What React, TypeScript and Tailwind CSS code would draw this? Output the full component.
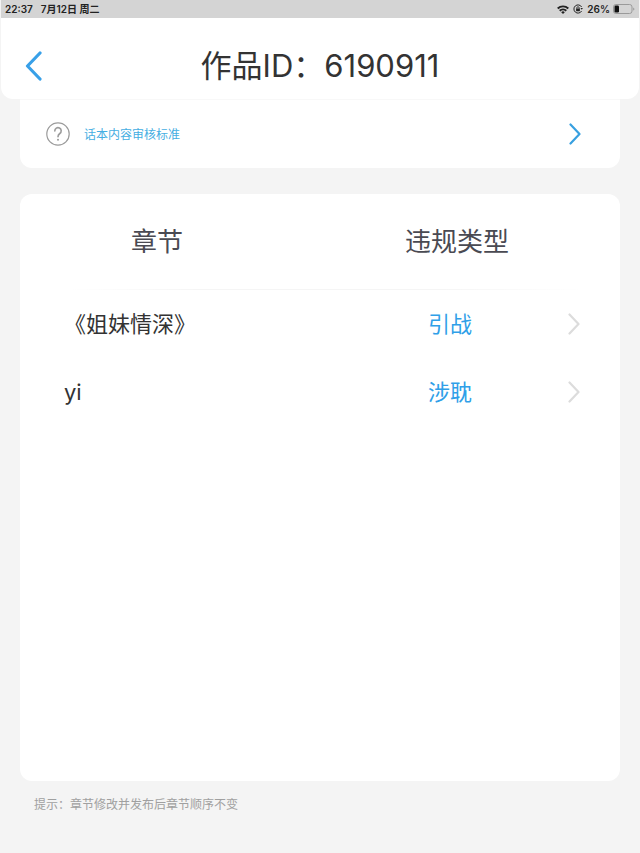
import React from 'react';

interface Chapter {
  id: number;
  name: string;
  violation: string;
}

const CHAPTERS: Chapter[] = [
  { id: 1, name: '《姐妹情深》', violation: '引战' },
  { id: 2, name: 'yi', violation: '涉耽' },
];

const Chevron: React.FC<{ className?: string; strokeWidth?: number }> = ({ className, strokeWidth = 2 }) => (
  <svg className={className} viewBox="0 0 12 22" fill="none" stroke="currentColor" strokeWidth={strokeWidth} strokeLinecap="round" strokeLinejoin="round" aria-hidden="true">
    <path d="M1.5 1.5L10.5 11L1.5 20.5" />
  </svg>
);

const StatusBar: React.FC = () => (
  <div className="h-[18px] shrink-0 bg-[#d4d4d4] pl-1 pr-1 flex items-center justify-between text-[10px] leading-4 font-semibold text-[#222]">
    <div className="flex gap-2">
      <span>22:37</span>
      <span>7月12日 周二</span>
    </div>
    <div className="flex items-center gap-1">
      {/* wifi */}
      <svg className="w-3 h-[9px]" viewBox="0 0 12 9" fill="none" stroke="currentColor" strokeWidth="1.9" aria-hidden="true">
        <path d="M0.7 3.5a7.6 7.6 0 0 1 10.6 0" />
        <path d="M2.7 5.8a4.7 4.7 0 0 1 6.6 0" />
        <path d="M6 9L4.2 7.2a2.6 2.6 0 0 1 3.6 0z" fill="currentColor" stroke="none" />
      </svg>
      {/* rotation lock */}
      <svg className="w-[10px] h-[10px]" viewBox="0 0 10 10" fill="none" stroke="currentColor" strokeWidth="1" aria-hidden="true">
        <path d="M8.6 3A4.1 4.1 0 1 0 8.6 7" />
        <path d="M7.4 4L9.9 4L8.8 5.8z" fill="currentColor" stroke="none" />
        <rect x="3.1" y="4.6" width="3.8" height="2.6" rx="0.4" fill="currentColor" stroke="none" />
        <path d="M3.8 4.8V3.9a1.2 1.2 0 0 1 2.4 0v0.9" strokeWidth="0.8" />
      </svg>
      <span>26%</span>
      {/* battery */}
      <svg className="-ml-px w-[22px] h-[10px]" viewBox="0 0 22 10" fill="none" aria-hidden="true">
        <rect x="0.5" y="0.5" width="18.5" height="9" rx="2.4" stroke="#9a9a9a" />
        <rect x="1.5" y="1.6" width="4.5" height="6.8" rx="1.2" fill="#111" />
        <path d="M20.2 3.4v3.2c0.8-0.3 1.2-0.9 1.2-1.6s-0.4-1.3-1.2-1.6z" fill="#9a9a9a" />
      </svg>
    </div>
  </div>
);

const App: React.FC = () => {
  return (
    <div className="min-h-screen bg-[#f4f4f4] flex flex-col px-px font-['Inter','Noto_Sans_CJK_SC',sans-serif]">
      <StatusBar />

      <header className="h-[81px] shrink-0 bg-white rounded-b-xl grid grid-cols-[1fr_auto_1fr] items-center px-6 pt-[14px]">
        <button type="button" aria-label="返回" className="w-4 text-[#38a0e8]">
          <svg className="w-[17px] h-[30px]" viewBox="0 0 17 30" fill="none" stroke="currentColor" strokeWidth="3.2" strokeLinecap="round" strokeLinejoin="round" aria-hidden="true">
            <path d="M15 2L2.5 15L15 28" />
          </svg>
        </button>
        <h1 className="text-[31px] leading-9 font-normal text-[#333]">作品ID：6190911</h1>
      </header>

      <main className="flex-1 flex flex-col px-[19px]">
        <a href="#standard" className="h-[69px] border-t border-[#f8f8f8] shrink-0 bg-white rounded-b-xl flex items-center pl-[26px] pr-[39px]">
          <svg className="w-6 h-6 text-[#9b9b9b]" viewBox="0 0 24 24" fill="none" stroke="currentColor" strokeWidth="1.2" strokeLinecap="round" aria-hidden="true">
            <circle cx="12" cy="12" r="11.2" />
            <path d="M8.8 8.9a3.2 3.2 0 1 1 5 2.6c-1.2 0.9-1.8 1.6-1.8 3.2" strokeWidth="1.6" />
            <circle cx="12" cy="17.7" r="1" fill="currentColor" stroke="none" />
          </svg>
          <span className="ml-[14px] pt-[2px] flex-1 text-xs text-[#45aee2]">话本内容审核标准</span>
          <Chevron className="w-3 h-[22px] text-[#38a0e0]" strokeWidth={2.2} />
        </a>

        <section className="mt-[26px] flex-1 bg-white rounded-xl">
          <table className="w-full table-fixed">
            <thead>
              <tr className="h-24 text-[26px] leading-9 text-[#4a4a52] bg-[linear-gradient(to_right,transparent_8%,#f5f5f5_30%,#f5f5f5_70%,transparent_94%)] bg-[length:100%_1px] bg-bottom bg-no-repeat">
                <th scope="col" className="w-[45%] pl-1 font-normal">章节</th>
                <th scope="col" className="pl-1 font-normal">违规类型</th>
              </tr>
            </thead>
            <tbody>
              {CHAPTERS.map((chapter) => (
                <tr key={chapter.id} className="h-[68px] text-[22px] leading-8">
                  <td className="pl-11 text-[#333]">{chapter.name}</td>
                  <td>
                    <a href={`#chapter-${chapter.id}`} className="flex items-center pl-[42px] pr-10 text-[#2f9fe8]">
                      <span className="flex-1 text-center">{chapter.violation}</span>
                      <Chevron className="w-3 h-[22px] text-[#dcdcdc]" strokeWidth={2.2} />
                    </a>
                  </td>
                </tr>
              ))}
            </tbody>
          </table>
        </section>

        <p className="h-[72px] shrink-0 pt-4 pl-[14px] text-xs text-[#a0a0a0]">提示：章节修改并发布后章节顺序不变</p>
      </main>
    </div>
  );
};

export default App;
